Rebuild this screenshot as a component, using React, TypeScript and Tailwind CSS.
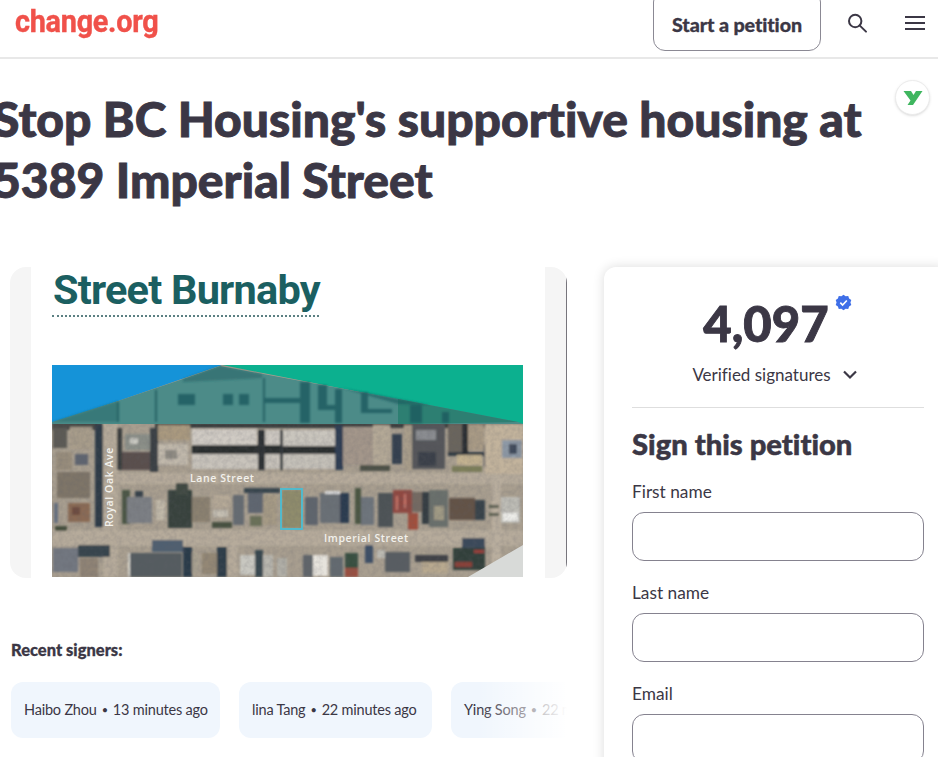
import React from "react";

const C = "#3b3745";

const buildings: [number, number, number, number, string][] = [
  // shadows & dark strips
  [155, 423, 368, 5, "#3a3d3c"], [52, 422, 50, 8, "#4a4a46"],
  [95, 424, 8, 103, "#2e3b46"], [117, 428, 5, 42, "#3a3e3c"], [150, 428, 8, 44, "#3a3f45"],
  [192, 445, 143, 9, "#2b2d2e"], [258, 430, 7, 40, "#2f3336"], [280, 430, 3, 40, "#33373a"],
  [335, 425, 8, 45, "#2f3d52"], [360, 462, 30, 9, "#4d5147"], [448, 452, 36, 4, "#333a42"], [462, 424, 6, 30, "#2b2e30"], [484, 445, 6, 22, "#3e4a58"],
  // top row
  [53, 428, 14, 20, "#5c5a55"], [70, 427, 22, 22, "#a79c8a"], [56, 452, 16, 18, "#988d7c"], [75, 454, 13, 11, "#5e6570"],
  [125, 434, 25, 16, "#8b8f88"], [122, 452, 28, 18, "#5a4f4d"], [130, 438, 8, 6, "#c8c8c0"],
  [158, 425, 32, 15, "#a9997f"], [158, 444, 30, 21, "#c0b8ab"], [165, 450, 12, 9, "#8e8a82"],
  [192, 429, 65, 16, "#cfcac3"], [192, 454, 66, 15, "#c8c3bb"], [265, 430, 15, 15, "#ccc7c0"], [265, 454, 15, 15, "#c6c1b9"],
  [283, 430, 52, 16, "#c9c5bd"], [283, 454, 52, 15, "#c4c0b8"],
  [343, 427, 30, 38, "#a3968a"], [373, 425, 17, 40, "#b3a896"], [392, 434, 10, 30, "#34404f"],
  [404, 425, 8, 45, "#a89d8a"], [412, 424, 33, 45, "#55565a"], [416, 430, 20, 10, "#8a8c90"], [418, 452, 18, 14, "#3b4048"],
  [448, 424, 14, 28, "#6a655d"], [468, 424, 16, 26, "#a89a85"], [457, 455, 25, 10, "#c3b290"], [452, 466, 30, 6, "#7d7f5a"],
  [485, 424, 38, 50, "#c2b39c"], [502, 440, 20, 18, "#8d98a5"], [509, 444, 8, 10, "#3f4c5c"],
  // lane row
  [57, 472, 33, 26, "#7e7468"], [54, 503, 4, 20, "#667080"], [68, 503, 22, 19, "#8a6a55"], [72, 507, 8, 8, "#6d4c40"], [55, 526, 12, 5, "#45503c"],
  [122, 490, 8, 34, "#4c5644"], [127, 497, 25, 26, "#7c7f84"], [135, 491, 8, 6, "#39424b"],
  [156, 500, 9, 20, "#c0b8a8"], [168, 490, 24, 38, "#39433e"], [176, 483, 12, 12, "#3f4a42"], [192, 497, 18, 25, "#8b8170"],
  [213, 495, 17, 13, "#b5a997"], [213, 510, 15, 7, "#c5bfb2"], [212, 522, 20, 6, "#47513f"], [233, 495, 11, 30, "#666c72"],
  [248, 493, 15, 20, "#5e6670"], [263, 495, 14, 30, "#a59a85"], [244, 488, 36, 5, "#39444e"], [250, 516, 12, 10, "#6a6f58"],
  [282, 490, 20, 38, "#8f8c6c"],
  [305, 497, 13, 28, "#5e656d"], [320, 493, 20, 30, "#6a7076"], [325, 491, 15, 3, "#dddddd"], [340, 493, 9, 30, "#2b3b50"],
  [355, 488, 6, 36, "#4b5742"], [361, 497, 13, 28, "#6e747c"], [378, 493, 15, 34, "#4d5257"], [393, 490, 19, 23, "#8f4a42"], [396, 496, 2, 14, "#c9776b"], [404, 494, 2, 14, "#c9776b"],
  [412, 492, 10, 20, "#756a62"], [408, 513, 10, 17, "#a0503c"], [422, 492, 7, 32, "#363d42"], [429, 490, 19, 37, "#6a6f6c"], [434, 506, 10, 14, "#a09a84"],
  [449, 498, 26, 22, "#645247"], [475, 500, 10, 20, "#39434a"], [501, 497, 19, 26, "#bdbcb5"], [503, 513, 15, 8, "#eeeeea"], [489, 505, 10, 3, "#5a5e50"], [489, 513, 10, 3, "#5a5e50"],
  // bottom row
  [78, 545, 32, 12, "#39444d"], [53, 548, 25, 24, "#727780"], [80, 558, 18, 19, "#8f8374"],
  [152, 540, 31, 12, "#4f5f70"], [130, 553, 52, 24, "#555b60"], [128, 553, 2, 24, "#dedbd2"], [183, 547, 9, 30, "#2c3a48"], [192, 553, 6, 20, "#a8a090"], [202, 553, 15, 21, "#938775"], [217, 547, 10, 30, "#2f3d4a"],
  [240, 555, 15, 20, "#c8c7c0"], [255, 550, 8, 27, "#39464f"], [263, 555, 10, 22, "#b8b6ae"], [277, 558, 10, 19, "#b0aea6"],
  [303, 555, 10, 22, "#60656b"], [313, 555, 15, 21, "#e6e3dc"], [330, 557, 13, 20, "#646a70"], [345, 553, 13, 15, "#39503f"], [345, 568, 13, 9, "#9a4f40"],
  [365, 545, 8, 18, "#3c4f66"], [377, 550, 8, 8, "#bcbab2"], [385, 552, 25, 20, "#585d62"], [415, 555, 33, 7, "#3f4346"], [422, 562, 26, 11, "#b8a98f"],
  [453, 548, 32, 22, "#33413a"], [462, 538, 23, 10, "#3a4a5a"], [455, 562, 17, 5, "#8a3f38"], [474, 550, 10, 3, "#9d3c38"],
];

function MapPicture() {
  return (
    <svg viewBox="52 365 471 212" className="block w-[471px] h-[212px]">
      <defs>
        <filter id="soft"><feGaussianBlur stdDeviation="0.9" /></filter>
        <filter id="grain" x="0" y="0" width="100%" height="100%">
          <feTurbulence type="fractalNoise" baseFrequency="0.22" numOctaves="2" seed="4" />
          <feColorMatrix values="0 0 0 0 0.12  0 0 0 0 0.12  0 0 0 0 0.14  1.6 0 0 0 -0.55" />
          <feGaussianBlur stdDeviation="0.6" />
        </filter>
      </defs>
      <rect x="52" y="365" width="471" height="212" fill="#a89e8f" />
      <g filter="url(#soft)">
        <rect x="118" y="473" width="405" height="11" fill="#b6ab9b" />
        <rect x="52" y="530" width="471" height="16" fill="#b6ab9b" />
        <rect x="103" y="424" width="15" height="153" fill="#b5aa9a" />
        <rect x="227" y="546" width="11" height="31" fill="#b5aa9a" />
        <rect x="492" y="470" width="9" height="107" fill="#b9ae9e" />
        {buildings.map(([x, y, w, h, f], i) => <rect key={i} x={x} y={y} width={w} height={h} fill={f} />)}
      </g>
      <rect x="52" y="424" width="471" height="153" filter="url(#grain)" opacity="0.22" />

      <polygon points="52,365 222,365 52,424" fill="#1593d8" />
      <polygon points="222,365 523,365 523,424" fill="#0cb08f" />
      <polygon points="52,422 118,401 183,379 220,366 290,379 398,399 518,422 523,424 52,424" fill="#4c8b88" />
      <polygon points="398,399 518,422 398,424" fill="#2d7f72" />
      <g fill="#1b5a5e" filter="url(#soft)" opacity="0.8">
        <polygon points="183,379 220,366 262,374 262,378 183,382" opacity="0.55" />
        <polygon points="52,422 118,401 118,422" opacity="0.45" />
        <rect x="178" y="394" width="17" height="11" /><rect x="223" y="394" width="10" height="11" /><rect x="239" y="394" width="10" height="11" />
        <rect x="265" y="398" width="35" height="5" /><rect x="300" y="382" width="10" height="41" /><rect x="318" y="385" width="9" height="25" />
        <rect x="327" y="405" width="8" height="5" /><rect x="335" y="389" width="7" height="34" /><rect x="361" y="392" width="7" height="21" /><rect x="368" y="409" width="24" height="4" />
        <rect x="410" y="405" width="12" height="18" /><rect x="442" y="412" width="7" height="11" /><rect x="155" y="390" width="2" height="32" /><rect x="117" y="402" width="2" height="20" /><rect x="263" y="378" width="2" height="44" />
        <polygon points="342,388 398,399 430,405 398,404" opacity="0.8" />
      </g>
      <polygon points="468,577 523,545 523,577" fill="#d8dad8" />
      <rect x="281" y="489" width="21" height="40" fill="none" stroke="#52b9cb" strokeWidth="2" />
      <g fill="#f2f1ec" fontFamily="Open Sans, sans-serif" fontSize="10.5" fontWeight="600">
        <text x="190" y="481.5" letterSpacing="0.6">Lane Street</text>
        <text x="324" y="541.5" letterSpacing="0.6">Imperial Street</text>
        <text transform="translate(112.5 527) rotate(-90)" letterSpacing="0.6">Royal Oak Ave</text>
      </g>
    </svg>
  );
}

function Chip({ name, time, className }: { name: string; time: string; className: string }) {
  return (
    <div className={`h-[56px] rounded-xl flex items-center px-[13px] whitespace-nowrap text-[14.5px] tracking-[-0.2px] shrink-0 ${className}`}>
      <span>{name}</span>
      <span className="mx-[5px] text-[11px]">•</span>
      <span>{time}</span>
    </div>
  );
}

function Field({ label }: { label: string }) {
  return (
    <div className="shrink-0">
      <div className="text-[17.300px] leading-[22px]">{label}</div>
      <div className="mt-[9px] h-[49px] w-[292px] rounded-xl border border-[#85828f] bg-white" />
    </div>
  );
}

export default function App() {
  return (
    <div className="relative w-[938px] h-[757px] overflow-hidden bg-white [font-variant-ligatures:none]" style={{ fontFamily: "Lato, sans-serif", color: C }}>
      <header className="h-[59px] border-b-2 border-[#e8e8e8] flex items-start justify-between">
        <div className="ml-[15px] mt-[1px] origin-left scale-x-[0.93] text-[31px] leading-[42px] font-bold tracking-[-0.3px] text-[#f0514a] [-webkit-text-stroke:0.4px_#f0514a]" style={{ fontFamily: "Roboto, sans-serif" }}>change.org</div>
        <div className="flex items-start">
          <div className="-mt-[10px] h-[61px] w-[168px] rounded-xl border border-[#8b8994] flex items-center justify-center pt-[8px] text-[19.700px] tracking-[-0.1px] font-black [-webkit-text-stroke:0.3px_#3b3745]">Start a petition</div>
          <svg width="24" height="24" viewBox="0 0 24 24" fill="none" stroke={C} strokeWidth="2" className="ml-[24px] mt-[11px]">
            <circle cx="10.200" cy="10" r="6.200" /><path d="M14.600 14.400 L21 20.600" strokeLinecap="round" />
          </svg>
          <svg width="22" height="16" viewBox="0 0 22 16" fill="none" stroke={C} strokeWidth="2" className="ml-[35px] mr-[12px] mt-[15px]">
            <path d="M1 2h20M1 8h20M1 14h20" />
          </svg>
        </div>
      </header>

      <h1 className="-ml-[7px] mt-[29px] w-[945px] text-[48px] leading-[61px] font-black [-webkit-text-stroke:0.9px_#3b3745]">
        Stop BC Housing's supportive housing at<br />
        5389 Imperial Street
      </h1>

      <div className="absolute left-[895px] top-[80px] w-[35px] h-[35px] rounded-full bg-white border border-[#ececec] shadow-sm flex items-center justify-center">
        <svg width="20" height="15" viewBox="0 0 20 15"><path d="M0.500 1 H8 L10.500 5 L13 1 H19.500 L10 15 H4.500 L7.500 10.500 Z" fill="#3fb65f" /></svg>
      </div>

      <main className="flex mt-[57px]">
        <section className="ml-[10px] w-[557px] shrink-0">
          <div className="h-[311px] rounded-2xl bg-[#f5f5f5] px-[21px] overflow-hidden relative">
            <div className="h-full w-[514px] bg-white pl-[21px]">
              <div className="text-[41.500px] leading-[46px] font-bold text-[#1b5f61] tracking-[-0.8px] pl-[1px]" style={{ fontFamily: "Roboto, sans-serif", paddingTop: 0 }}>Street Burnaby</div>
              <div className="mt-[2px] w-[267px] border-t-2 border-dotted border-[#5b8082]" />
              <div className="mt-[48px]"><MapPicture /></div>
            </div>
            <div className="absolute right-0 top-[8px] bottom-[8px] w-[1.500px] bg-[#77757c]" />
          </div>
          <div className="mt-[61px] pl-[1px] text-[16.500px] leading-[22px] font-black [-webkit-text-stroke:0.3px_#3b3745]">Recent signers:</div>
          <div className="mt-[21px] ml-[1px] flex gap-[19px] overflow-hidden relative">
            <Chip name="Haibo Zhou" time="13 minutes ago" className="bg-[#f0f6fd] w-[209px]" />
            <Chip name="lina Tang" time="22 minutes ago" className="bg-[#f0f6fd] w-[193px]" />
            <Chip name="Ying Song" time="22 minutes ago" className="bg-[#f0f6fd]" />
            <div className="absolute right-0 top-0 h-full w-[90px] bg-gradient-to-r from-transparent to-white" />
          </div>
        </section>

        <aside className="ml-[37px] w-[340px] shrink-0 h-[520px] rounded-tl-xl bg-white shadow-[0_0_12px_rgba(0,0,0,0.14)] pl-[28px] pr-[20px]">
          <div className="flex justify-center pt-[26px] pr-[24px]">
            <div className="relative text-[49px] leading-[60px] font-black [-webkit-text-stroke:0.9px_#3b3745]">
              4,097
              <svg width="17" height="17" viewBox="0 0 24 24" className="absolute -right-[23px] top-[1px]">
                <path d="M12 1l3 2.300 3.700-.4 1.200 3.500 3.100 2.100-1.200 3.500 1.200 3.500-3.100 2.100-1.200 3.500-3.700-.4L12 23l-3-2.300-3.700.4-1.200-3.500L1 15.500 2.200 12 1 8.500l3.100-2.100 1.200-3.500 3.700.4z" fill="#3f6fe8" stroke="none" />
                <path d="M7.500 12.300l3.200 3.200 6-6.300" fill="none" stroke="#fff" strokeWidth="2.400" />
              </svg>
            </div>
          </div>
          <div className="mt-[10px] flex items-center justify-center text-[17px] leading-[24px] pr-[6px]">
            Verified signatures
            <svg width="16" height="10" viewBox="0 0 16 10" fill="none" stroke={C} strokeWidth="2.200" className="ml-[11px]"><path d="M2 1.500l6 6 6-6" /></svg>
          </div>
          <div className="mt-[20px] border-t border-[#dedede]" />
          <h2 className="mt-[18px] text-[29.200px] leading-[36px] font-black [-webkit-text-stroke:0.5px_#3b3745]">Sign this petition</h2>
          <div className="mt-[19px] flex flex-col gap-[21px]">
            <Field label="First name" />
            <Field label="Last name" />
            <Field label="Email" />
          </div>
        </aside>
      </main>
    </div>
  );
}
